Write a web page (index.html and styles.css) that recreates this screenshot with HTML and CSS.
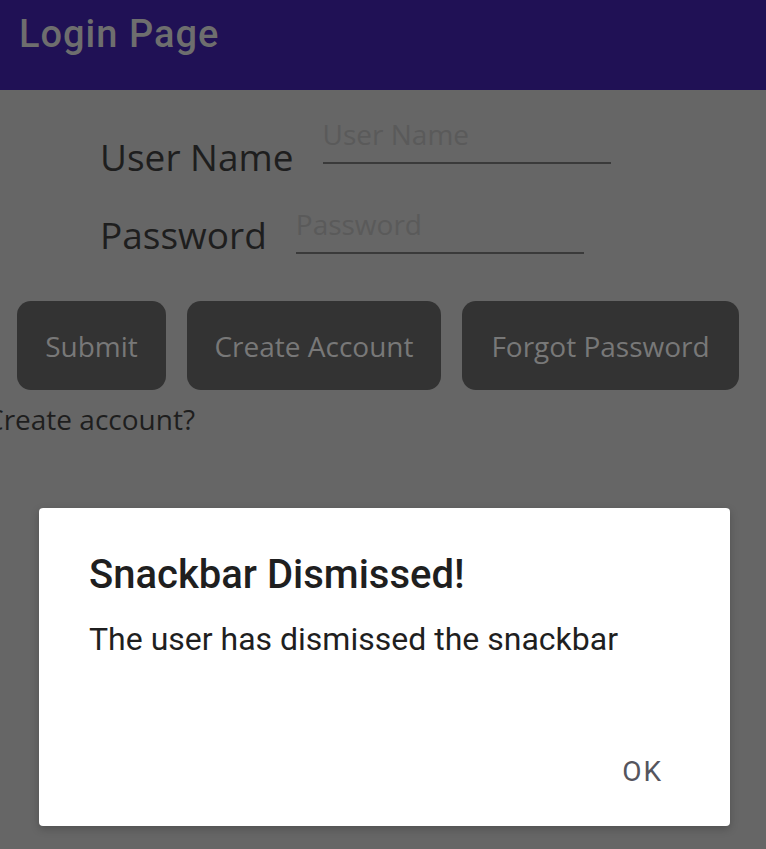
FILE: index.html
```html
<!DOCTYPE html>
<html>
<head>
<meta charset="utf-8">
<link rel="stylesheet" href="styles.css">
</head>
<body>
<div class="page">
  <header class="appbar"><span class="apptitle">Login Page</span></header>
  <main class="content">
    <div class="form">
      <div class="row row1">
        <span class="label">User Name</span>
        <div class="entry"><span class="ph">User Name</span></div>
      </div>
      <div class="row row2">
        <span class="label">Password</span>
        <div class="entry"><span class="ph">Password</span></div>
      </div>
    </div>
    <div class="buttons">
      <div class="btn btn-submit">Submit</div>
      <div class="btn btn-create">Create Account</div>
      <div class="btn btn-forgot">Forgot Password</div>
    </div>
    <div class="link">Create account?</div>
  </main>
</div>
<div class="dialog">
  <div class="dtitle">Snackbar Dismissed!</div>
  <div class="dbody">The user has dismissed the snackbar</div>
  <div class="dactions"><span class="ok">OK</span></div>
</div>
</body>
</html>
```
FILE: styles.css
```css
html, body {
  margin: 0;
  padding: 0;
  width: 766px;
  height: 849px;
  overflow: hidden;
  background: #666666;
}
.page {
  display: flex;
  flex-direction: column;
  height: 849px;
}
.appbar {
  height: 90px;
  flex: none;
  background: #201155;
  padding: 16px 0 0 19px;
  box-sizing: border-box;
}
.apptitle {
  display: block;
  font-family: Roboto, sans-serif;
  font-weight: 500;
  font-size: 38px;
  line-height: 36px;
  letter-spacing: 1px;
  color: #6e6e6e;
}
.content {
  font-family: "Open Sans", sans-serif;
}
.form {
  padding-left: 100px;
  padding-top: 29px;
  display: flex;
  flex-direction: column;
}
.row {
  display: flex;
  align-items: flex-start;
}
.label {
  font-size: 37px;
  color: #1e1e1e;
  line-height: 44px;
  white-space: nowrap;
}
.row1 .label { margin-top: 16px; }
.row2 { margin-top: 30px; }
.row2 .label { margin-top: 4px; }
.entry {
  width: 288px;
  height: 45px;
  border-bottom: 2px solid #3a3a3a;
  box-sizing: border-box;
}
.row1 .entry { margin-left: 29px; }
.row2 .entry { margin-left: 29px; }
.ph {
  display: block;
  font-size: 28px;
  line-height: 30px;
  color: #5a5a5a;
}
.buttons {
  display: flex;
  gap: 21px;
  padding-left: 17px;
  margin-top: 44px;
}
.btn {
  height: 89px;
  border-radius: 14px;
  background: #333333;
  color: #787878;
  font-size: 28px;
  display: flex;
  align-items: center;
  justify-content: center;
  box-sizing: border-box;
  white-space: nowrap;
}
.btn-submit { width: 149px; }
.btn-create { width: 254px; }
.btn-forgot { width: 277px; }
.link {
  font-size: 28px;
  line-height: 38px;
  color: #1e1e1e;
  margin-left: -14px;
  margin-top: 10px;
  white-space: nowrap;
}
.dialog {
  position: absolute;
  left: 39px;
  top: 508px;
  width: 691px;
  height: 318px;
  background: #ffffff;
  border-radius: 4px;
  box-shadow: 0 3px 8px rgba(0,0,0,0.22);
  box-sizing: border-box;
  padding: 47px 0 0 50px;
  font-family: Roboto, sans-serif;
  display: flex;
  flex-direction: column;
}
.dtitle {
  font-size: 40px;
  font-weight: 500;
  color: #1f1f1f;
  line-height: 40px;
  white-space: nowrap;
}
.dbody {
  margin-top: 24px;
  font-size: 32px;
  color: #1f1f1f;
  line-height: 40px;
  white-space: nowrap;
}
.dactions {
  margin-top: auto;
  display: flex;
  justify-content: flex-end;
  padding-right: 67px;
  padding-bottom: 38px;
}
.ok {
  font-size: 28px;
  line-height: 32px;
  font-weight: 400;
  letter-spacing: 2px;
  color: #55555d;
}
```
